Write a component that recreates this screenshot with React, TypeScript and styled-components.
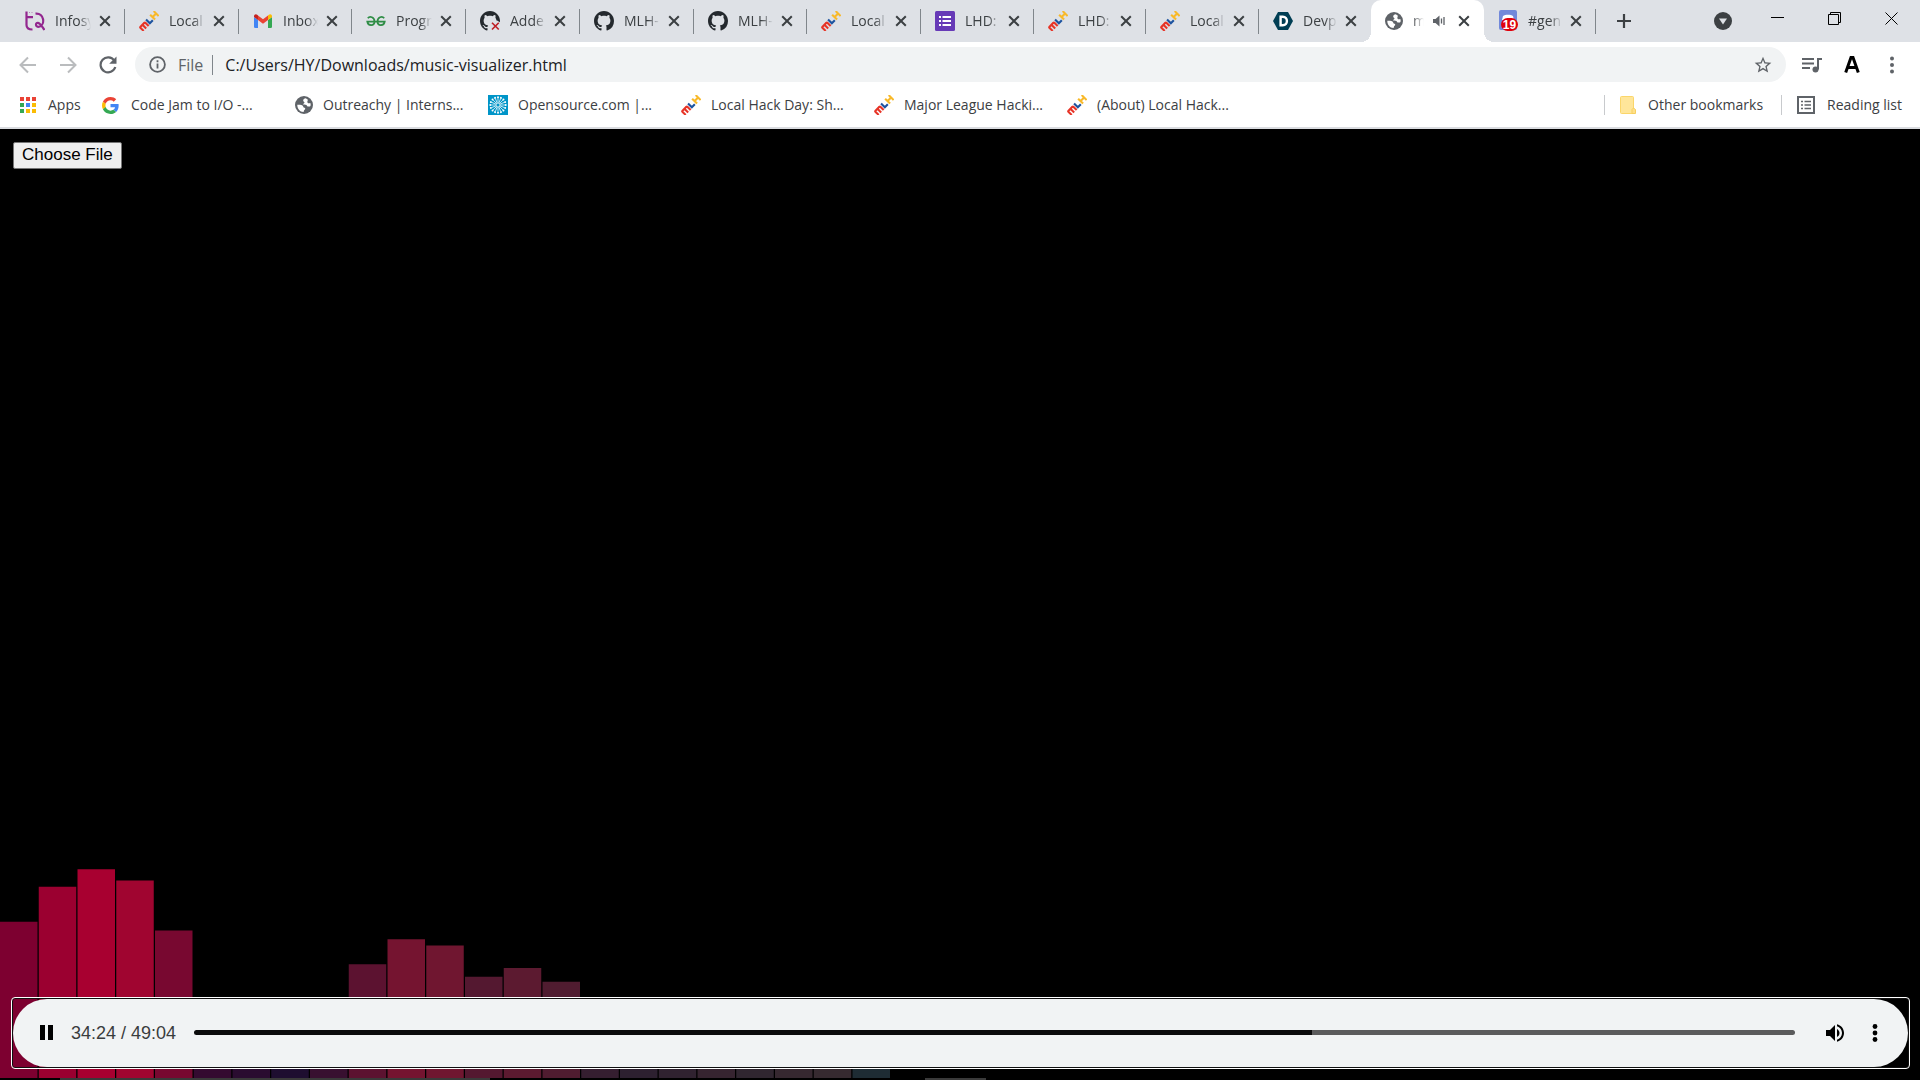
import React from 'react';
import styled, { createGlobalStyle } from 'styled-components';

const GlobalStyle = createGlobalStyle`
  *, *::before, *::after { box-sizing: border-box; }
  html, body { margin: 0; background: #000; }
  body { font-family: "Open Sans", "Noto Sans", sans-serif; color: #3c4043; }
  button, input { font: inherit; color: inherit; }
`;

const Shell = styled.div`
  display: flex;
  flex-direction: column;
  height: 100vh;
  overflow: hidden;
`;

/* ---------- tab strip ---------- */

const TabStrip = styled.header`
  display: flex;
  align-items: stretch;
  flex: none;
  height: 42px;
  padding-left: 11px;
  background: #dee1e6;
`;

const TabItem = styled.div<{ $width: number; $active?: boolean; $bare?: boolean }>`
  position: relative;
  display: flex;
  align-items: center;
  flex: none;
  width: ${(p) => p.$width}px;
  padding: 0 10px 0 14px;
  border-radius: 10px 10px 0 0;
  background: ${(p) => (p.$active ? '#fff' : 'transparent')};

  &::after {
    content: '';
    position: absolute;
    right: 0;
    top: 9px;
    height: 25px;
    width: 1px;
    background: #80868b;
    display: ${(p) => (p.$active || p.$bare ? 'none' : 'block')};
  }
`;

const TabFoot = styled.span<{ $side: 'left' | 'right' }>`
  position: absolute;
  bottom: 0;
  ${(p) => p.$side}: -10px;
  width: 10px;
  height: 10px;
  background: radial-gradient(circle at ${(p) => (p.$side === 'left' ? '0 0' : '100% 0')}, transparent 10px, #fff 10px);
`;

const TabTitle = styled.span`
  flex: 1;
  min-width: 0;
  margin: 0 4px 0 10px;
  overflow: hidden;
  white-space: nowrap;
  font-size: 14px;
  line-height: 20px;
  mask-image: linear-gradient(to right, #000 calc(100% - 12px), transparent);
`;

const IconButton = styled.button<{ $size: number }>`
  display: inline-flex;
  align-items: center;
  justify-content: center;
  flex: none;
  width: ${(p) => p.$size}px;
  height: ${(p) => p.$size}px;
  padding: 0;
  border: 0;
  border-radius: 50%;
  background: transparent;
`;

const AudioButton = styled(IconButton)`
  margin: 0 8px 0 4px;
`;

const NewTab = styled(IconButton)`
  align-self: center;
  margin-left: 12px;
`;

const WindowControls = styled.div`
  display: flex;
  align-items: flex-start;
  margin-left: auto;
`;

const TabSearch = styled(IconButton)`
  align-self: center;
  margin-right: 10px;
`;

const WindowButton = styled.button`
  display: flex;
  align-items: center;
  justify-content: center;
  width: 57px;
  height: 37px;
  padding: 0;
  border: 0;
  background: transparent;
`;

/* ---------- toolbar ---------- */

const Toolbar = styled.nav`
  display: flex;
  align-items: center;
  flex: none;
  height: 45px;
  padding: 0 12px;
  background: #fff;
`;

const NavButtons = styled.div`
  display: flex;
  gap: 8px;
  margin-right: 11px;
`;

const Omnibox = styled.div`
  display: flex;
  align-items: center;
  flex: 1;
  height: 35px;
  padding: 0 11px 0 14px;
  border-radius: 18px;
  background: #f1f3f4;
`;

const Scheme = styled.span`
  margin-left: 12px;
  padding-right: 9px;
  border-right: 1px solid #80868b;
  font-size: 16px;
  line-height: 20px;
  color: #5f6368;
`;

const Address = styled.input`
  flex: 1;
  min-width: 0;
  height: 28px;
  padding: 0 0 0 12px;
  border: 0;
  outline: 0;
  background: transparent;
  font-size: 16px;
  color: #202124;
`;

const ToolbarActions = styled.div`
  display: flex;
  gap: 8px;
  margin-left: 10px;
`;

/* ---------- bookmarks ---------- */

const BookmarksBar = styled.nav`
  display: flex;
  align-items: center;
  flex: none;
  height: 42px;
  padding: 0 18px 4px;
  background: #fff;
  border-bottom: 2px solid #dadce0;
`;

const Bookmark = styled.a<{ $width?: number; $gap?: number }>`
  display: flex;
  align-items: center;
  flex: none;
  gap: ${(p) => p.$gap ?? 10}px;
  width: ${(p) => (p.$width ? `${p.$width}px` : 'auto')};
  font-size: 14px;
  line-height: 20px;
  white-space: nowrap;
  color: #3c4043;
  text-decoration: none;
`;

const BookmarkGroup = styled.div`
  display: flex;
  margin-left: auto;
`;

const BookmarkEnd = styled.div`
  display: flex;
  padding-left: 15px;
  margin-left: 18px;
  border-left: 1px solid #c8cacd;
`;

/* ---------- visualizer page ---------- */

const Stage = styled.main`
  display: grid;
  flex: 1;
  min-height: 0;
  background: #000;
`;

const Spectrum = styled.svg`
  grid-area: 1 / 1;
  align-self: end;
  width: 100%;
  height: auto;
`;

const Overlay = styled.div`
  grid-area: 1 / 1;
  z-index: 1;
  display: flex;
  flex-direction: column;
  justify-content: space-between;
  padding: 13px 10px 9px 11px;
`;

const FileButton = styled.button`
  align-self: flex-start;
  height: 27px;
  margin-left: 2px;
  padding: 0 8px 2px;
  border: 1px solid #767676;
  border-radius: 2px;
  background: #efefef;
  font-family: "Liberation Sans", Arial, sans-serif;
  font-size: 17px;
  line-height: 22px;
  color: #000;
`;

const PlayerFrame = styled.section`
  padding: 1px;
  border: 1px solid #fff;
  border-radius: 4px;
  box-shadow: inset 0 0 0 1px #101010;
`;

const Player = styled.div`
  display: flex;
  align-items: center;
  height: 68px;
  padding: 0 13px 1px;
  border-radius: 34px;
  background: #f1f3f4;
  font-family: "Liberation Sans", Arial, sans-serif;
`;

const Time = styled.span`
  margin: 0 18px 0 5px;
  font-size: 18px;
  line-height: 24px;
  color: #3a3c3d;
  white-space: nowrap;
`;

const Seek = styled.input<{ $played: number }>`
  appearance: none;
  flex: 1;
  min-width: 0;
  height: 5px;
  margin: 0 20px 0 0;
  border-radius: 3px;
  background: linear-gradient(to right, #0b0b0c ${(p) => p.$played}%, #5b5b5c ${(p) => p.$played}%);
  &::-webkit-slider-thumb { appearance: none; width: 0; height: 0; }
`;

const BottomEdge = styled.footer`
  display: grid;
  grid-template-columns: 60fr 430fr 435fr 61fr 934fr;
  flex: none;
  height: 2px;
  background: #000;
`;

const EdgeSegment = styled.span<{ $column: number }>`
  grid-column: ${(p) => p.$column};
  background: #3a3a3a;
`;

/* ---------- icons ---------- */

const CloseIcon = () => (
  <svg width="12" height="12" viewBox="0 0 12 12" fill="none" stroke="#3c4043" strokeWidth="2">
    <path d="M1.2 1.2l9.6 9.6M10.8 1.2l-9.6 9.6" />
  </svg>
);

const MlhIcon = () => (
  <svg width="20" height="20" viewBox="0 0 20 20" fill="none" strokeWidth="2.1">
    <g transform="rotate(-45 10 10)">
      <path stroke="#e73427" d="M-.8 13.300V8.600Q-.8 8 0 8H5.400Q6.200 8 6.200 8.600v4.700M2.700 8v5.300" />
      <path stroke="#1d539f" d="M9 6.800v5.400h4.200" />
      <path stroke="#f8b92a" d="M15.300 6.300v7M20.300 6.300v7M15.300 9.800h5" />
    </g>
  </svg>
);

const InfosysIcon = () => (
  <svg width="20" height="20" viewBox="0 0 20 20" fill="none" stroke="#93278f" strokeWidth="2.2">
    <path d="M1.500.5v13.500c0 3 2.500 4.500 6 4.500M1.500 6.200H8" />
    <path d="M10.500 2.600c9-1 10 11.500 3.500 13.200-3.500.8-4-4.300-1-4 2.500.4 4 3.500 6.500 7.200" />
    <path d="M4 1.500h1M6.500 1.500h1" strokeWidth="1" opacity=".5" />
  </svg>
);

const GmailIcon = () => (
  <svg width="20" height="20" viewBox="0 0 20 20">
    <path fill="#4285f4" d="M1 6l4 3v8H2.300A1.300 1.300 0 0 1 1 15.700z" />
    <path fill="#34a853" d="M19 6l-4 3v8h2.700a1.300 1.300 0 0 0 1.300-1.300z" />
    <path fill="#ea4335" d="M5 4.500l5 3.800 5-3.800V9l-5 3.800L5 9z" />
    <path fill="#c5221f" d="M1 5.200c0-2 2-2.600 3.200-1.500L5 4.500V9L1 6z" />
    <path fill="#fbbc04" d="M19 5.200c0-2-2-2.600-3.200-1.500L15 4.500V9l4-3z" />
  </svg>
);

const GeeksIcon = () => (
  <svg width="20" height="20" viewBox="0 0 20 20" fill="none" stroke="#2f8d46" strokeWidth="1.800">
    <path d="M1.800 7.300c2-2.500 6.700-1.300 6.700 3.200 0 4.800-6.500 4.800-7.200.2H18.700c-.7 4.600-7.200 4.600-7.200-.2 0-4.500 4.700-5.700 6.700-3.200" />
  </svg>
);

const GithubIcon = ({ failed }: { failed?: boolean }) => (
  <svg width="20" height="20" viewBox="0 0 16 16">
    <path
      fill="#24292e"
      d="M8 0C3.580 0 0 3.580 0 8c0 3.540 2.290 6.530 5.470 7.590.4.070.55-.170.55-.380 0-.190-.010-.820-.010-1.490-2.010.370-2.530-.490-2.690-.940-.090-.230-.480-.940-.820-1.130-.280-.150-.680-.520-.010-.530.630-.010 1.080.580 1.230.820.720 1.210 1.870.870 2.330.660.070-.520.280-.870.510-1.070-1.780-.200-3.640-.890-3.640-3.950 0-.870.310-1.590.820-2.150-.080-.200-.360-1.020.080-2.120 0 0 .670-.210 2.200.820.640-.180 1.320-.270 2-.270s1.360.090 2 .270c1.530-1.040 2.200-.820 2.200-.820.440 1.100.160 1.920.080 2.120.510.560.820 1.270.820 2.150 0 3.070-1.870 3.750-3.650 3.950.290.250.540.730.540 1.480 0 1.070-.010 1.930-.010 2.200 0 .210.150.460.550.380A8.010 8.010 0 0 0 16 8c0-4.420-3.580-8-8-8z"
    />
    {failed && <circle cx="12.300" cy="12" r="4.600" fill="#dee1e6" />}
    {failed && <path d="M9.600 9.400l5.400 5.400M15 9.400l-5.400 5.400" stroke="#bd1e24" strokeWidth="1.300" />}
  </svg>
);

const FormsIcon = () => (
  <svg width="20" height="20" viewBox="0 0 20 20">
    <rect width="20" height="20" rx="1.500" fill="#673ab7" />
    <path stroke="#fff" strokeWidth="2" d="M4 6h2M4 10h2M4 14h2M7.500 6H16M7.500 10H16M7.500 14H16" />
  </svg>
);

const DevpostIcon = () => (
  <svg width="20" height="20" viewBox="0 0 20 20">
    <path fill="#003e54" d="M5 1h10l5 9-5 9H5L0 10z" />
    <path fill="none" stroke="#fff" strokeWidth="2.400" d="M7.600 5.800h2.200c5.500 0 5.500 8.400 0 8.400H7.600z" />
  </svg>
);

const GlobeIcon = () => (
  <svg width="18" height="18" viewBox="0 0 18 18">
    <circle cx="9" cy="9" r="9" fill="#5f6368" />
    <path fill="#fff" d="M10.800 2.200c-1.500.2-2.700 1.200-2.600 2.500.1 1 1.200.8 1.300 1.800 0 .9-1.500 1-1.500 2.100 1.600.2 3.500-.2 4.100 1.300.3.900 1.600.5 2.800.6 1-.3.900-2.200.4-3.500-1.200.3-2.200.5-2.700-.3-.6-1.200.2-2 .3-2.900z" />
    <path fill="#fff" d="M2.300 8.700c1.800.2 3.700-.2 5.200.8 1 .8.500 2 1.900 2.200 1.100.2 1.100 1.500.2 2.100-1 .7-.4 1.600-1.200 2.200-3.500-.2-6.200-3.300-6.100-7.300z" />
  </svg>
);

const DiscordIcon = () => (
  <svg width="20" height="22" viewBox="0 0 20 22">
    <rect x="1" width="18" height="20" rx="2" fill="#7289da" />
    <path fill="#fff" d="M5 6c2-1.800 8-1.800 10 0l1 4H4z" />
    <rect x="3" y="8" width="17" height="13" rx="6.500" fill="#e0000b" />
    <text x="11.500" y="18.500" textAnchor="middle" fontFamily="Liberation Sans, Arial, sans-serif" fontWeight="700" fontSize="12" fill="#fff">19</text>
  </svg>
);

const TabSpeakerIcon = () => (
  <svg width="14" height="14" viewBox="0 0 14 14" fill="none" stroke="#5f6368">
    <path fill="#5f6368" stroke="none" d="M1 5h2.500L7.500 1.500v11L3.500 9H1z" />
    <path strokeWidth="1.300" d="M9.500 4.500v5M12 3v8" />
  </svg>
);

const GoogleIcon = () => (
  <svg width="17" height="17" viewBox="0 0 48 48">
    <path fill="#ea4335" d="M24 9.500c3.540 0 6.710 1.220 9.210 3.600l6.850-6.850C35.900 2.380 30.470 0 24 0 14.620 0 6.510 5.380 2.560 13.220l7.980 6.190C12.430 13.720 17.740 9.500 24 9.500z" />
    <path fill="#4285f4" d="M46.980 24.550c0-1.570-.15-3.090-.38-4.550H24v9.020h12.940c-.58 2.960-2.260 5.480-4.780 7.180l7.730 6c4.510-4.180 7.090-10.360 7.090-17.650z" />
    <path fill="#fbbc05" d="M10.530 28.590c-.48-1.450-.76-2.990-.76-4.590s.27-3.140.76-4.590l-7.980-6.190C.92 16.460 0 20.120 0 24s.92 7.540 2.560 10.780z" />
    <path fill="#34a853" d="M24 48c6.480 0 11.930-2.130 15.890-5.810l-7.730-6c-2.150 1.450-4.920 2.300-8.160 2.300-6.260 0-11.570-4.220-13.470-9.910l-7.980 6.190C6.510 42.620 14.620 48 24 48z" />
  </svg>
);

const AppsIcon = () => {
  const colors = ['#ea4335', '#ea4335', '#ea4335', '#34a853', '#4285f4', '#fbbc04', '#34a853', '#fbbc04', '#fbbc04'];
  return (
    <svg width="20" height="20" viewBox="0 0 20 20">
      {colors.map((c, i) => (
        <rect key={i} x={2 + (i % 3) * 6} y={2 + Math.floor(i / 3) * 6} width="4" height="4" fill={c} />
      ))}
    </svg>
  );
};

const OpensourceIcon = () => (
  <svg width="20" height="20" viewBox="0 0 20 20">
    <rect width="20" height="20" fill="#0095c8" />
    {Array.from({ length: 16 }, (_, i) => (
      <g key={i} transform={`rotate(${i * 22.5} 10 10)`}>
        <path stroke="#fff" strokeWidth=".7" d="M10 8.500V3" />
        <circle cx="10" cy="2.300" r="1" fill="#fff" />
      </g>
    ))}
  </svg>
);

const FolderIcon = () => (
  <svg width="16" height="20" viewBox="0 0 16 20">
    <rect x=".5" y="1.500" width="13" height="17" rx="1" fill="#ffe69a" stroke="#fbd66a" />
    <path d="M12 18.500v-4l1.500-1.500 2 1.500v4z" fill="#ffe08a" stroke="#f6cf5f" />
  </svg>
);

const ReadingIcon = () => (
  <svg width="18" height="18" viewBox="0 0 18 18" fill="none" stroke="#5f6368">
    <rect x="1" y="1" width="16" height="16" strokeWidth="2" />
    <path strokeWidth="1.500" d="M4 5.500h2M4 9h2M4 12.500h2M7.500 5.500H14M7.500 9H14M7.500 12.500H14" />
  </svg>
);

/* ---------- data ---------- */

type Tab = { title: string; icon: React.ReactNode; width: number; active?: boolean; bare?: boolean };

const tabs: Tab[] = [
  { title: 'Infosy', icon: <InfosysIcon />, width: 114 },
  { title: 'Local', icon: <MlhIcon />, width: 114 },
  { title: 'Inbox', icon: <GmailIcon />, width: 113 },
  { title: 'Progr', icon: <GeeksIcon />, width: 114 },
  { title: 'Adde', icon: <GithubIcon failed />, width: 114 },
  { title: 'MLH-', icon: <GithubIcon />, width: 114 },
  { title: 'MLH-', icon: <GithubIcon />, width: 113 },
  { title: 'Local', icon: <MlhIcon />, width: 114 },
  { title: 'LHD:', icon: <FormsIcon />, width: 113 },
  { title: 'LHD:', icon: <MlhIcon />, width: 112 },
  { title: 'Local', icon: <MlhIcon />, width: 113 },
  { title: 'Devp', icon: <DevpostIcon />, width: 112, bare: true },
  { title: 'm', icon: <GlobeIcon />, width: 113, active: true },
  { title: '#gen', icon: <DiscordIcon />, width: 112 },
];

const bookmarks = [
  { title: 'Code Jam to I/O -...', icon: <GoogleIcon />, gap: 12 },
  { title: 'Outreachy | Interns...', icon: <GlobeIcon /> },
  { title: 'Opensource.com |...', icon: <OpensourceIcon /> },
  { title: 'Local Hack Day: Sh...', icon: <MlhIcon /> },
  { title: 'Major League Hacki...', icon: <MlhIcon /> },
  { title: '(About) Local Hack...', icon: <MlhIcon /> },
];

const bars: [number, string][] = [
  [125, '#7d0030'], [153, '#9b0030'], [167, '#a80030'], [158, '#a00530'], [118, '#780830'],
  [50, '#340a30'], [44, '#2a0c30'], [38, '#1e0e30'], [50, '#381030'],
  [91, '#5c1230'], [111, '#751430'], [106, '#701630'], [81, '#541830'], [88, '#5c1a30'], [77, '#501c30'],
  [54, '#351e30'], [46, '#2d2030'], [48, '#302230'], [52, '#362430'], [46, '#302630'],
  [50, '#362830'], [50, '#362a30'], [30, '#1e2c34'],
];

const duration = 49 * 60 + 4;
const elapsed = 34 * 60 + 15;

export default function App() {
  return (
    <Shell>
      <GlobalStyle />
      <TabStrip>
        {tabs.map((tab, i) => (
          <TabItem key={i} $width={tab.width} $active={tab.active} $bare={tab.bare}>
            {tab.active && <TabFoot $side="left" />}
            {tab.icon}
            <TabTitle>{tab.title}</TabTitle>
            {tab.active && (
              <AudioButton $size={14} aria-label="Mute tab"><TabSpeakerIcon /></AudioButton>
            )}
            <IconButton $size={20} aria-label="Close tab"><CloseIcon /></IconButton>
            {tab.active && <TabFoot $side="right" />}
          </TabItem>
        ))}
        <NewTab $size={32} aria-label="New tab">
          <svg width="16" height="16" viewBox="0 0 16 16" stroke="#3c4043" strokeWidth="2.200">
            <path d="M8 1v14M1 8h14" />
          </svg>
        </NewTab>
        <WindowControls>
          <TabSearch $size={32} aria-label="Search tabs">
            <svg width="18" height="18" viewBox="0 0 18 18">
              <circle cx="9" cy="9" r="9" fill="#3c4043" />
              <path fill="#dee1e6" d="M5 6.500h8L9 12.500z" />
            </svg>
          </TabSearch>
          <WindowButton aria-label="Minimize">
            <svg width="13" height="13" viewBox="0 0 13 13" stroke="#000"><path d="M0 5.500h13" /></svg>
          </WindowButton>
          <WindowButton aria-label="Restore">
            <svg width="13" height="13" viewBox="0 0 13 13" fill="none" stroke="#000">
              <path d="M.5 2.500h10v10H.5zM2.500 2.500v-2h10v10h-2" />
            </svg>
          </WindowButton>
          <WindowButton aria-label="Close">
            <svg width="13" height="13" viewBox="0 0 13 13" stroke="#000"><path d="M.5.5l12 12M12.500.5l-12 12" /></svg>
          </WindowButton>
        </WindowControls>
      </TabStrip>

      <Toolbar>
        <NavButtons>
          <IconButton $size={32} aria-label="Back">
            <svg width="18" height="18" viewBox="0 0 18 18" fill="none" stroke="#babcbe" strokeWidth="2">
              <path d="M17 9H2M9 1.500L1.500 9 9 16.500" />
            </svg>
          </IconButton>
          <IconButton $size={32} aria-label="Forward">
            <svg width="18" height="18" viewBox="0 0 18 18" fill="none" stroke="#babcbe" strokeWidth="2">
              <path d="M1 9h15M9 1.500L16.500 9 9 16.500" />
            </svg>
          </IconButton>
          <IconButton $size={32} aria-label="Reload">
            <svg width="18" height="18" viewBox="0 0 18 18" fill="none" stroke="#5f6368" strokeWidth="2.200">
              <path d="M15.300 4.600A7.500 7.500 0 1 0 16.300 11" />
              <path fill="#5f6368" stroke="none" d="M17.500.5v7.300h-7.300z" />
            </svg>
          </IconButton>
        </NavButtons>
        <Omnibox>
          <svg width="17" height="17" viewBox="0 0 17 17" fill="none" stroke="#5f6368" strokeWidth="1.800">
            <circle cx="8.500" cy="8.500" r="7.400" />
            <path d="M8.500 7.500v5M8.500 4.300v1.900" />
          </svg>
          <Scheme>File</Scheme>
          <Address aria-label="Address" defaultValue="C:/Users/HY/Downloads/music-visualizer.html" />
          <IconButton $size={24} aria-label="Bookmark this page">
            <svg width="20" height="20" viewBox="0 0 24 24" fill="#5f6368">
              <path d="M22 9.240l-7.190-.62L12 2 9.190 8.630 2 9.240l5.460 4.730L5.820 21 12 17.270 18.180 21l-1.630-7.030zM12 15.400l-3.760 2.270 1-4.280-3.320-2.880 4.380-.38L12 6.100l1.710 4.040 4.380.38-3.320 2.880 1 4.280z" />
            </svg>
          </IconButton>
        </Omnibox>
        <ToolbarActions>
          <IconButton $size={32} aria-label="Control your media">
            <svg width="20" height="18" viewBox="0 0 20 18" fill="none" stroke="#5f6368" strokeWidth="2">
              <path d="M0 3h12M0 7.500h12M0 12h8M16 13.500V3h4" />
              <circle cx="13.500" cy="13.500" r="3" fill="#5f6368" stroke="none" />
            </svg>
          </IconButton>
          <IconButton $size={32} aria-label="Extension">
            <svg width="16" height="17" viewBox="0 0 16 17" fill="none" stroke="#000" strokeWidth="3">
              <path d="M1.700 16.500L7 1.500h2l5.300 15M4 11.500h8" />
            </svg>
          </IconButton>
          <IconButton $size={32} aria-label="Menu">
            <svg width="4" height="18" viewBox="0 0 4 18" fill="#5f6368">
              <circle cx="2" cy="2.500" r="2" /><circle cx="2" cy="9" r="2" /><circle cx="2" cy="15.500" r="2" />
            </svg>
          </IconButton>
        </ToolbarActions>
      </Toolbar>

      <BookmarksBar>
        <Bookmark href="#apps" $width={84}><AppsIcon />Apps</Bookmark>
        {bookmarks.map((b) => (
          <Bookmark key={b.title} href="#bookmark" $width={193} $gap={b.gap}>{b.icon}{b.title}</Bookmark>
        ))}
        <BookmarkGroup>
          <BookmarkEnd><Bookmark href="#other" $gap={12}><FolderIcon />Other bookmarks</Bookmark></BookmarkEnd>
          <BookmarkEnd><Bookmark href="#reading" $gap={12}><ReadingIcon />Reading list</Bookmark></BookmarkEnd>
        </BookmarkGroup>
      </BookmarksBar>

      <Stage>
        <Spectrum viewBox="0 0 1536 168" aria-hidden="true">
          {bars.map(([height, color], i) => (
            <rect key={i} x={i * 31} y={168 - height} width="30" height={height} fill={color} />
          ))}
        </Spectrum>
        <Overlay>
          <FileButton type="button">Choose File</FileButton>
          <PlayerFrame aria-label="Audio player">
            <Player>
              <IconButton $size={40} aria-label="Pause">
                <svg width="13" height="15" viewBox="0 0 13 15"><path d="M0 0h5v15H0zM8 0h5v15H8z" /></svg>
              </IconButton>
              <Time>34:24 / 49:04</Time>
              <Seek
                type="range"
                aria-label="Seek"
                min={0}
                max={duration}
                defaultValue={elapsed}
                $played={(elapsed / duration) * 100}
              />
              <IconButton $size={40} aria-label="Mute">
                <svg width="24" height="24" viewBox="0 0 24 24">
                  <path d="M3 9v6h4l5 5V4L7 9zm13.500 3c0-1.770-1.020-3.290-2.500-4.030v8.050c1.480-.73 2.500-2.250 2.500-4.020zM14 3.230v2.060c2.890.86 5 3.540 5 6.710s-2.110 5.850-5 6.710v2.060c4.010-.91 7-4.490 7-8.770s-2.990-7.860-7-8.770z" />
                </svg>
              </IconButton>
              <IconButton $size={40} aria-label="More options">
                <svg width="6" height="18" viewBox="0 0 6 18">
                  <circle cx="3" cy="2.500" r="2.400" /><circle cx="3" cy="9" r="2.400" /><circle cx="3" cy="15.500" r="2.400" />
                </svg>
              </IconButton>
            </Player>
          </PlayerFrame>
        </Overlay>
      </Stage>
      <BottomEdge aria-hidden="true">
        <EdgeSegment $column={2} />
        <EdgeSegment $column={4} />
      </BottomEdge>
    </Shell>
  );
}
